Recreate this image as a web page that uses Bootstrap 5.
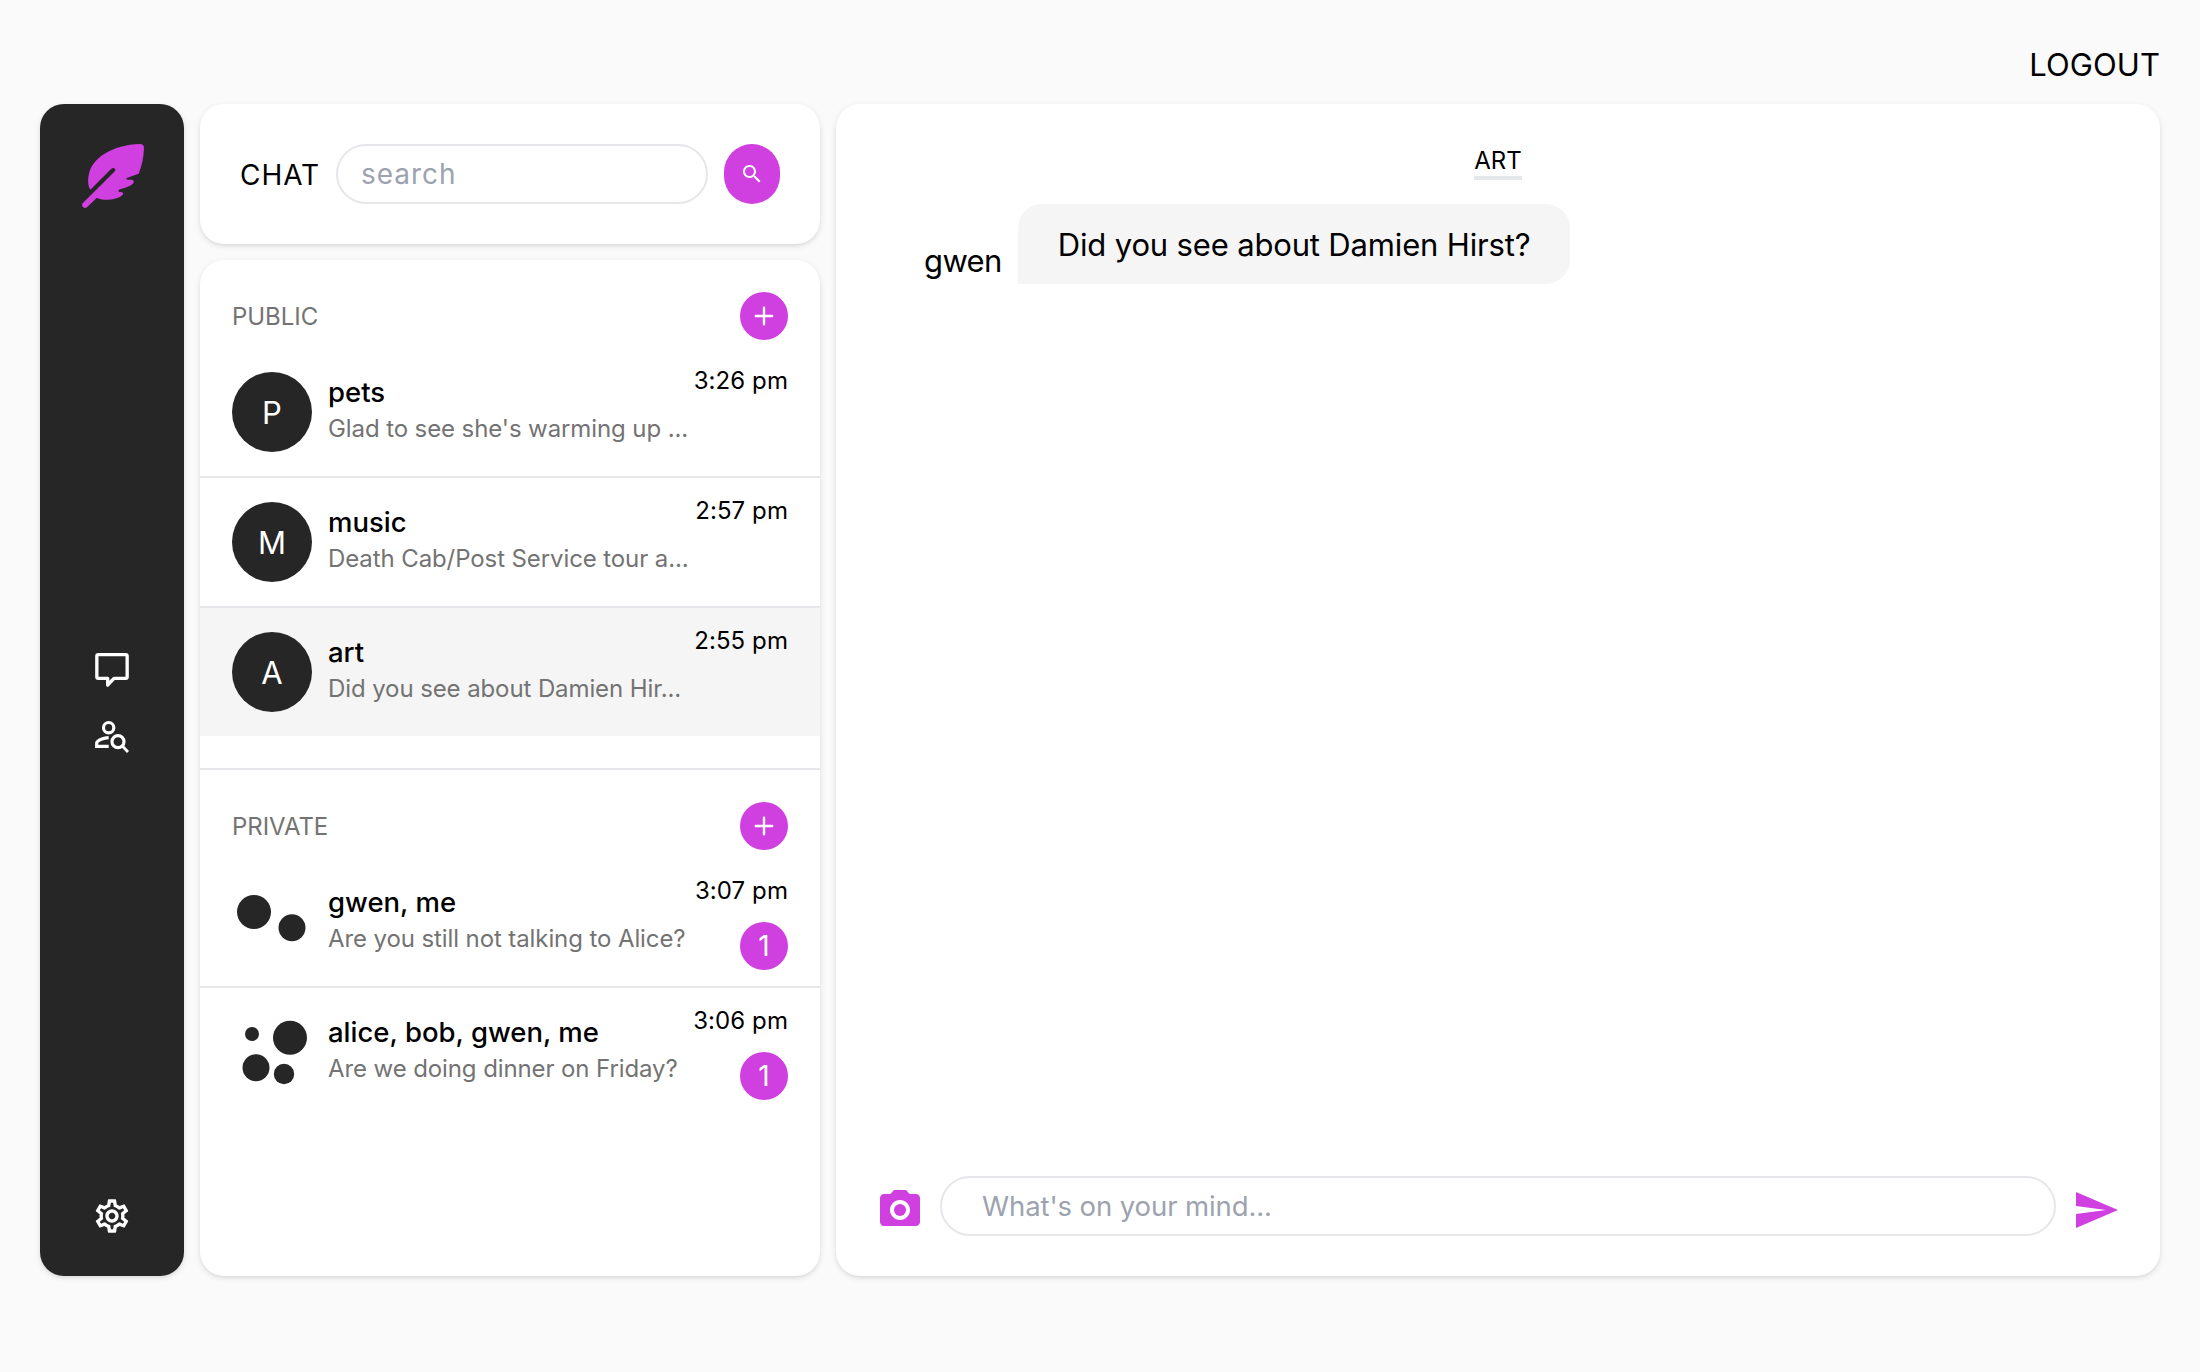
<!DOCTYPE html>
<html lang="en">
<head>
<meta charset="utf-8">
<meta name="viewport" content="width=device-width, initial-scale=1">
<title>Chat</title>
<link href="https://cdn.jsdelivr.net/npm/bootstrap@5.3.0/dist/css/bootstrap.min.css" rel="stylesheet">
<style>
  :root { --brand: #d03fe0; --ink: #262626; --line: #e5e7eb; --muted: #737373; --hint: #9ca3af; }
  body { background: #fafafa; color: #000; font-family: Inter, "Liberation Sans", sans-serif; font-size: 24px; line-height: 32px; }
  .app-shell { height: 1372px; padding: 24px 40px 96px; }
  .logout-link { color: #000; font-size: 31px; height: 80px; line-height: 82px; letter-spacing: .06px; }
  .workspace { gap: 16px; min-height: 0; }
  .panel { background: #fff; border-radius: 24px; box-shadow: 0 2px 6px rgba(0,0,0,.1), 0 2px 4px -2px rgba(0,0,0,.1); }
  .side-rail { width: 144px; background: var(--ink); color: #fff; padding: 40px 0; }
  .rail-links { gap: 27px; margin-top: 27px; }
  .rail-bottom { flex: 1 1 0; }
  .side-col { width: 620px; gap: 16px; }
  .search-panel { height: 140px; padding: 40px; }
  .chat-title { width: 96px; padding-top: 2px; font-size: 28px; letter-spacing: .95px; }
  .pill-input { height: 60px; border: 2px solid var(--line); border-radius: 30px; font-size: 28px; line-height: 40px; color: #000; background: #fff; }
  .pill-input::placeholder { color: var(--hint); opacity: 1; }
  .search-input { padding: 0 23px; letter-spacing: .97px; }
  .search-btn { width: 56px; height: 60px; border-radius: 28px; background: var(--brand); color: #fff; margin-left: 16px; }
  .round-mark { width: 48px; height: 48px; background: var(--brand); color: #fff; font-size: 28px; }
  .section-head { padding: 32px 32px 8px; color: var(--muted); letter-spacing: -.05px; }
  .section-head span { padding-top: 1px; }
  .section-rule { border-top: 2px solid var(--line); margin-top: 32px; }
  .room { height: 130px; padding: 16px 32px 0; border-bottom: 2px solid var(--line); }
  .room.last-room { height: 128px; border-bottom: 0; }
  .room.current { background: #f5f5f5; }
  .avatar-slot { width: 80px; height: 80px; margin: 8px 16px 0 0; }
  .avatar-disc { background: var(--ink); color: #fff; font-size: 31px; padding-top: 2px; }
  .room-text { padding-top: 9px; }
  .room-name { font-size: 27.5px; font-weight: 500; line-height: 39px; letter-spacing: 0; }
  .room-preview { color: var(--muted); line-height: 34px; letter-spacing: -.1px; white-space: nowrap; }
  .room-meta { gap: 16px; }
  .room-time { display: block; height: 32px; line-height: 33px; letter-spacing: .08px; white-space: nowrap; }
  .chat-panel { padding: 40px; }
  .room-heading { height: 36px; line-height: 34px; border-bottom: 4px solid var(--line); }
  .message-row { gap: 16px; padding-left: 48px; margin-top: 24px; }
  .sender { font-size: 31px; height: 48px; line-height: 50px; letter-spacing: -.6px; }
  .bubble { font-size: 31px; height: 80px; line-height: 82px; padding: 0 40px; letter-spacing: -.16px; background: #f5f5f5; border-radius: 24px 24px 24px 0; }
  .message-input { padding: 0 40px; font-size: 27.5px; letter-spacing: -.1px; margin: 0 16px; }
  .brand-icon { color: var(--brand); }
  svg { display: block; flex: none; }
</style>
</head>
<body>
<div class="app-shell d-flex flex-column">
  <header class="d-flex justify-content-end">
    <a class="logout-link text-decoration-none" href="#">LOGOUT</a>
  </header>

  <main class="workspace d-flex flex-grow-1">
    <nav class="panel side-rail d-flex flex-column align-items-center">
      <div class="rail-bottom">
        <svg width="64" height="64" viewBox="12 18 192 192" fill="var(--brand)"><path d="M42 154C36 145 35 125 38 112C46 60 110 20 192 18Q204 18 204 30C203 58 198 82 188 107L152 120Q148 124 156 125L168 125Q176 127 172 135C168 142 160 146 129 155Q124 161 131 162L138 163Q144 166 139 172C122 186 88 190 62 180L33 208Q27 212 21 207Q16 203 20 196L115 101Q120 96 117 92Q112 88 106 92L46 152Q43 155 42 154Z"/></svg>
      </div>
      <div class="rail-links d-flex flex-column">
        <svg width="40" height="40" viewBox="186 90 120 120" fill="none" stroke="#fff" stroke-width="10" stroke-linejoin="round"><path d="M205 104H287Q291.500 104 291.500 108.500V171Q291.500 175 287 175H252L233 195V175H205Q200.500 175 200.500 171V108.500Q200.500 104 205 104Z"/></svg>
        <svg width="40" height="40" viewBox="186 290 120 120" fill="none" stroke="#fff" stroke-width="9.500"><circle cx="236" cy="322" r="15.500"/><path d="M236 352C222 353 208 358 202 364Q200 366 200 369V378H236"/><circle cx="264" cy="364" r="18"/><path d="M277 377L294 395" stroke-width="8.500"/></svg>
      </div>
      <div class="rail-bottom d-flex align-items-end">
        <svg width="40" height="40" viewBox="0 0 24 24" fill="#fff"><path d="M19.430 12.980c.04-.32.07-.64.07-.98 0-.34-.03-.66-.07-.98l2.110-1.650c.19-.15.24-.42.12-.64l-2-3.460c-.09-.16-.26-.25-.44-.25-.06 0-.12.01-.17.03l-2.490 1c-.52-.4-1.080-.73-1.690-.98l-.38-2.650C14.460 2.180 14.250 2 14 2h-4c-.25 0-.46.18-.49.42l-.38 2.650c-.61.25-1.170.59-1.690.98l-2.490-1c-.06-.02-.12-.03-.18-.03-.17 0-.34.09-.43.25l-2 3.460c-.13.22-.07.49.12.64l2.110 1.650c-.04.32-.07.65-.07.98 0 .33.03.66.07.98l-2.110 1.650c-.19.15-.24.42-.12.64l2 3.460c.09.16.26.25.44.25.06 0 .12-.01.17-.03l2.490-1c.52.4 1.080.73 1.690.98l.38 2.650c.03.24.24.42.49.42h4c.25 0 .46-.18.49-.42l.38-2.650c.61-.25 1.170-.59 1.690-.98l2.490 1c.06.02.12.03.18.03.17 0 .34-.09.43-.25l2-3.460c.12-.22.07-.49-.12-.64l-2.110-1.650zm-1.980-1.710c.04.31.05.52.05.73 0 .21-.02.43-.05.73l-.14 1.130.89.7 1.080.84-.7 1.210-1.270-.51-1.040-.42-.9.68c-.43.32-.84.56-1.250.73l-1.060.43-.16 1.130-.2 1.350h-1.400l-.19-1.350-.16-1.130-1.060-.43c-.43-.18-.83-.41-1.230-.71l-.91-.7-1.060.43-1.270.51-.7-1.210 1.080-.84.89-.7-.14-1.130c-.03-.31-.05-.54-.05-.74s.02-.43.05-.73l.14-1.130-.89-.7-1.080-.84.7-1.210 1.270.51 1.040.42.9-.68c.43-.32.84-.56 1.250-.73l1.060-.43.16-1.130.2-1.350h1.390l.19 1.350.16 1.130 1.060.43c.43.18.83.41 1.230.71l.91.7 1.060-.43 1.270-.51.7 1.210-1.070.85-.89.7.14 1.130zM12 8c-2.210 0-4 1.790-4 4s1.790 4 4 4 4-1.790 4-4-1.790-4-4-4zm0 6c-1.100 0-2-.9-2-2s.9-2 2-2 2 .9 2 2-.9 2-2 2z"/></svg>
      </div>
    </nav>

    <div class="side-col d-flex flex-column flex-shrink-0">
      <form class="panel search-panel d-flex align-items-center">
        <label class="chat-title flex-shrink-0" for="room-search">CHAT</label>
        <input id="room-search" class="form-control pill-input search-input" type="text" placeholder="search">
        <button type="button" class="btn search-btn d-flex align-items-center justify-content-center flex-shrink-0 p-0 border-0" aria-label="Search">
          <svg width="24" height="24" viewBox="0 0 24 24" fill="currentColor"><path d="M15.500 14h-.79l-.28-.27C15.410 12.590 16 11.110 16 9.500 16 5.910 13.090 3 9.500 3S3 5.910 3 9.500 5.910 16 9.500 16c1.610 0 3.090-.59 4.230-1.570l.27.28v.79l5 4.990L20.490 19l-4.990-5zm-6 0C7.010 14 5 11.990 5 9.500S7.010 5 9.500 5 14 7.010 14 9.500 11.990 14 9.500 14z"/></svg>
        </button>
      </form>

      <section class="panel flex-grow-1 overflow-hidden">
        <div class="section-head d-flex justify-content-between align-items-center">
          <span>PUBLIC</span>
          <button type="button" class="btn round-mark rounded-circle d-flex align-items-center justify-content-center p-0 border-0" aria-label="Add public room">
            <svg width="20" height="20" viewBox="0 0 20 20" stroke="#fff" stroke-width="2.400" stroke-linecap="round"><path d="M10 1.800V18.200M1.800 10H18.200"/></svg>
          </button>
        </div>
        <div class="room d-flex">
          <div class="avatar-slot avatar-disc rounded-circle d-flex align-items-center justify-content-center">P</div>
          <div class="room-text flex-grow-1"><div class="room-name">pets</div><div class="room-preview">Glad to see she's warming up ...</div></div>
          <div class="room-meta"><span class="room-time">3:26 pm</span></div>
        </div>
        <div class="room d-flex">
          <div class="avatar-slot avatar-disc rounded-circle d-flex align-items-center justify-content-center">M</div>
          <div class="room-text flex-grow-1"><div class="room-name">music</div><div class="room-preview">Death Cab/Post Service tour a...</div></div>
          <div class="room-meta"><span class="room-time">2:57 pm</span></div>
        </div>
        <div class="room last-room current d-flex">
          <div class="avatar-slot avatar-disc rounded-circle d-flex align-items-center justify-content-center">A</div>
          <div class="room-text flex-grow-1"><div class="room-name">art</div><div class="room-preview">Did you see about Damien Hir...</div></div>
          <div class="room-meta"><span class="room-time">2:55 pm</span></div>
        </div>

        <div class="section-rule"></div>
        <div class="section-head d-flex justify-content-between align-items-center">
          <span>PRIVATE</span>
          <button type="button" class="btn round-mark rounded-circle d-flex align-items-center justify-content-center p-0 border-0" aria-label="Add private room">
            <svg width="20" height="20" viewBox="0 0 20 20" stroke="#fff" stroke-width="2.400" stroke-linecap="round"><path d="M10 1.800V18.200M1.800 10H18.200"/></svg>
          </button>
        </div>
        <div class="room d-flex">
          <svg class="avatar-slot" viewBox="0 0 80 80" fill="#262626"><circle cx="22" cy="30" r="17"/><circle cx="60" cy="45.800" r="13.500"/></svg>
          <div class="room-text flex-grow-1"><div class="room-name">gwen, me</div><div class="room-preview">Are you still not talking to Alice?</div></div>
          <div class="room-meta d-flex flex-column align-items-end"><span class="room-time">3:07 pm</span><span class="round-mark rounded-circle d-flex align-items-center justify-content-center">1</span></div>
        </div>
        <div class="room last-room d-flex">
          <svg class="avatar-slot" viewBox="0 0 80 80" fill="#262626"><circle cx="20" cy="22" r="7"/><circle cx="58" cy="25.800" r="17"/><circle cx="24" cy="55.800" r="13.500"/><circle cx="52" cy="62" r="10.200"/></svg>
          <div class="room-text flex-grow-1"><div class="room-name">alice, bob, gwen, me</div><div class="room-preview">Are we doing dinner on Friday?</div></div>
          <div class="room-meta d-flex flex-column align-items-end"><span class="room-time">3:06 pm</span><span class="round-mark rounded-circle d-flex align-items-center justify-content-center">1</span></div>
        </div>
      </section>
    </div>

    <section class="panel chat-panel d-flex flex-column flex-grow-1">
      <div class="room-heading align-self-center">ART</div>
      <div class="message-row d-flex align-items-end">
        <span class="sender">gwen</span>
        <div class="bubble">Did you see about Damien Hirst?</div>
      </div>
      <form class="d-flex align-items-center mt-auto">
        <svg class="brand-icon" width="48" height="48" viewBox="0 -2 24 24" fill="currentColor"><circle cx="12" cy="12" r="3"/><path d="M9 2L7.170 4H4c-1.100 0-2 .9-2 2v12c0 1.100.9 2 2 2h16c1.100 0 2-.9 2-2V6c0-1.100-.9-2-2-2h-3.170L15 2H9zm3 15c-2.760 0-5-2.240-5-5s2.240-5 5-5 5 2.240 5 5-2.240 5-5 5z"/></svg>
        <input class="form-control pill-input message-input" type="text" placeholder="What's on your mind...">
        <svg class="brand-icon" width="48" height="48" viewBox="0 -2 24 24" fill="currentColor"><path d="M2.010 21L23 12 2.010 3 2 10l15 2-15 2z"/></svg>
      </form>
    </section>
  </main>
</div>
<script src="https://cdn.jsdelivr.net/npm/bootstrap@5.3.0/dist/js/bootstrap.bundle.min.js"></script>
</body>
</html>
